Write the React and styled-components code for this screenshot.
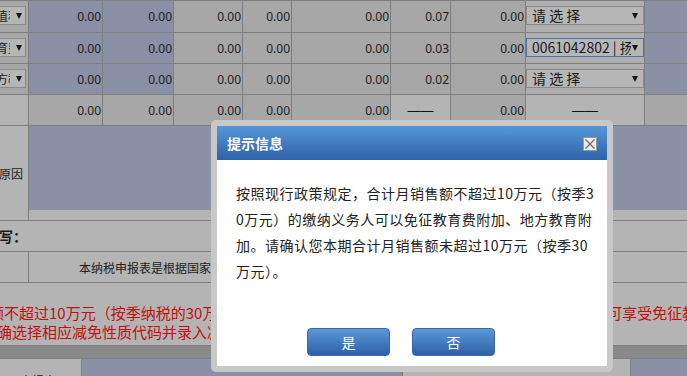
import React from "react";
import styled, { createGlobalStyle } from "styled-components";

const LINE = "#7e7e7e";
const BLUE = "#8a90a5";
const GRAY = "#a7a7a7";
const LIGHT = "#b4b4b4";

const GlobalStyle = createGlobalStyle`
  html, body {
    margin: 0;
    padding: 0;
  }
  body {
    width: 687px;
    height: 376px;
    overflow: hidden;
    background: ${LIGHT};
    color: #1d1d1d;
    font-family: "Noto Sans CJK SC", "Noto Sans", sans-serif;
  }
`;

const rows = [
  { tax: "值税", nums: ["0.00", "0.00", "0.00", "0.00", "0.00", "0.07", "0.00"], pick: "请 选 择" },
  { tax: "育费", nums: ["0.00", "0.00", "0.00", "0.00", "0.00", "0.03", "0.00"], pick: "0061042802 | 扬州", focus: true },
  { tax: "方教", nums: ["0.00", "0.00", "0.00", "0.00", "0.00", "0.02", "0.00"], pick: "请 选 择" },
];

const numTone = (i) => (i < 2 ? "blue" : "gray");

function App() {
  return (
    <Page>
      <GlobalStyle />
      <Sheet>
        {rows.map((row, r) => (
          <React.Fragment key={r}>
            <Cell $tone="gray" $align="left">
              <Select $w={32} $shift={-6} $pad={1}>
                <SelectLabel $size={12} $w={14}>{row.tax}</SelectLabel>
                <Caret $gap={6} />
              </Select>
            </Cell>
            {row.nums.map((n, i) => (
              <Cell key={i} $tone={numTone(i)}>
                <Num>{n}</Num>
              </Cell>
            ))}
            <Cell $tone="select" $align="left">
              <Select $w={118} $pad={5} $focus={row.focus}>
                <SelectLabel $size={14}>{row.pick}</SelectLabel>
                <Caret $gap={1} />
              </Select>
            </Cell>
            <Cell $tone="blue" />
          </React.Fragment>
        ))}

        <Cell $tone="light" />
        {["0.00", "0.00", "0.00", "0.00", "0.00"].map((n, i) => (
          <Cell key={i} $tone="gray">
            <Num>{n}</Num>
          </Cell>
        ))}
        <Cell $tone="light" $align="center">
          <Dash>——</Dash>
        </Cell>
        <Cell $tone="gray">
          <Num>0.00</Num>
        </Cell>
        <Cell $tone="light" $align="center">
          <Dash>——</Dash>
        </Cell>
        <Cell $tone="gray" />

        <Cell $tone="light">
          <Label>减免原因</Label>
        </Cell>
        <ReasonCell $span="2 / -1">
          <ReasonBox />
        </ReasonCell>

        <Cell $tone="light" $span="1 / -1" $align="left">
          <SectionTitle>填写：</SectionTitle>
        </Cell>

        <Cell $tone="light" />
        <Cell $tone="light" $span="2 / -1" $align="left">
          <Statement>本纳税申报表是根据国家税收法律法规及相关规定填报的，是真实的、可靠的、完整的。</Statement>
        </Cell>

        <NoteCell $span="1 / -1">
          <NoteLine $shift={-11}>
            额不超过10万元（按季纳税的30万元）的缴纳义务人，在申报教育费附加与地方教育附加时，可享受免征教育费附加、地方教育附加。
          </NoteLine>
          <NoteLine $shift={-3}>确选择相应减免性质代码并录入减免额。</NoteLine>
        </NoteCell>
      </Sheet>

      <Band />

      <FooterRow>
        <Cell $tone="light" $align="center">
          <Label>申报人</Label>
        </Cell>
        <Cell $tone="blue" />
        <Cell $tone="light" />
        <Cell $tone="blue" />
      </FooterRow>

      <Dialog>
        <DialogHeader>
          <DialogTitle>提示信息</DialogTitle>
          <CloseButton>
            <svg width="12" height="12" viewBox="0 0 12 12">
              <path d="M1.5 1.5 L10.5 10.5 M10.5 1.5 L1.5 10.5" stroke="#6a6a6a" strokeWidth="1.2" fill="none" />
            </svg>
          </CloseButton>
        </DialogHeader>
        <DialogBody>
          <Message>
            按照现行政策规定，合计月销售额不超过10万元（按季30万元）的缴纳义务人可以免征教育费附加、地方教育附加。请确认您本期合计月销售额未超过10万元（按季30万元）。
          </Message>
          <ButtonRow>
            <DialogButton>是</DialogButton>
            <DialogButton>否</DialogButton>
          </ButtonRow>
        </DialogBody>
      </Dialog>
    </Page>
  );
}

const toneColor = {
  blue: BLUE,
  gray: GRAY,
  light: LIGHT,
  select: "#afafaf",
};

const alignMap = {
  left: "flex-start",
  center: "center",
  right: "flex-end",
};

const Page = styled.div`
  position: relative;
  width: 687px;
  height: 376px;
  overflow: hidden;
`;

const Sheet = styled.div`
  display: grid;
  grid-template-columns: 28px 73px 70px 68px 48px 98px 59px 74px 118px 1fr;
  grid-template-rows: 31px 30px 30px 30px 94px 30px 30px 62px;
  gap: 1px;
  padding: 1px 0;
  background: ${LINE};
`;

const Cell = styled.div`
  display: flex;
  align-items: center;
  justify-content: ${(p) => alignMap[p.$align || "right"]};
  grid-column: ${(p) => p.$span || "auto"};
  min-width: 0;
  overflow: hidden;
  white-space: nowrap;
  background: ${(p) => toneColor[p.$tone] || LIGHT};
`;

const Num = styled.span`
  padding-right: 1px;
  font-family: "Noto Sans", "Liberation Sans", sans-serif;
  font-size: 12px;
  color: #202020;
`;

const Dash = styled.span`
  font-family: "Liberation Sans", sans-serif;
  font-size: 13px;
  color: #111;
`;

const Select = styled.div`
  box-sizing: border-box;
  display: flex;
  align-items: center;
  align-self: flex-start;
  flex-shrink: 0;
  width: ${(p) => p.$w}px;
  height: 19px;
  margin-top: 5px;
  margin-left: ${(p) => p.$shift || 0}px;
  padding: 0 5px 0 ${(p) => p.$pad}px;
  border: 1px solid ${(p) => (p.$focus ? "#4c72aa" : "#8a8a8a")};
  background: #b6b6b6;
`;

const SelectLabel = styled.span`
  flex: ${(p) => (p.$w ? "none" : "1")};
  width: ${(p) => (p.$w ? `${p.$w}px` : "auto")};
  overflow: hidden;
  font-size: ${(p) => p.$size}px;
  line-height: 17px;
  color: #1b1b1b;
`;

const Caret = styled.span`
  flex: none;
  width: 0;
  height: 0;
  margin-left: ${(p) => p.$gap}px;
  border-left: 3px solid transparent;
  border-right: 3px solid transparent;
  border-top: 6px solid #151515;
`;

const Label = styled.span`
  padding-right: 5px;
  font-size: 12px;
  color: #1b1b1b;
`;

const ReasonCell = styled(Cell)`
  align-items: stretch;
  padding-bottom: 10px;
  background: ${LIGHT};
`;

const ReasonBox = styled.div`
  flex: 1;
  background: ${BLUE};
`;

const SectionTitle = styled.span`
  margin-left: -15px;
  font-size: 14px;
  font-weight: 600;
  color: #1a1a1a;
`;

const Statement = styled.span`
  padding-left: 50px;
  font-size: 12px;
  color: #1d1d1d;
`;

const NoteCell = styled(Cell)`
  flex-direction: column;
  align-items: flex-start;
  justify-content: flex-start;
  padding-top: 20px;
  background: ${LIGHT};
`;

const NoteLine = styled.div`
  margin-left: ${(p) => p.$shift}px;
  font-size: 15px;
  line-height: 19px;
  color: #c20f0f;
  white-space: nowrap;
`;

const Band = styled.div`
  height: 12px;
  background: #8a8a8a;
`;

const FooterRow = styled.div`
  display: grid;
  grid-template-columns: 81px 320px 227px 1fr;
  grid-auto-rows: 42px;
  gap: 1px;
  padding-top: 1px;
  background: ${LINE};
`;

const Dialog = styled.div`
  position: absolute;
  left: 211px;
  top: 120px;
  width: 402px;
  height: 252px;
  box-sizing: border-box;
  display: flex;
  flex-direction: column;
  padding: 6px;
  border-radius: 5px;
  background: #c8c8c8;
`;

const DialogHeader = styled.div`
  display: flex;
  align-items: center;
  justify-content: space-between;
  height: 34px;
  padding: 0 10px;
  background: linear-gradient(#5596d6, #2f62a8);
`;

const DialogTitle = styled.span`
  font-size: 14px;
  font-weight: 700;
  color: #fff;
`;

const CloseButton = styled.span`
  box-sizing: border-box;
  display: flex;
  align-items: center;
  justify-content: center;
  width: 14px;
  height: 14px;
  margin-top: 2px;
  border: 1px solid #9a9a9a;
  background: #ececec;
`;

const DialogBody = styled.div`
  flex: 1;
  display: flex;
  flex-direction: column;
  padding: 20px 0 10px 19px;
  background: #fff;
`;

const Message = styled.p`
  width: 362px;
  margin: 0;
  font-size: 14px;
  line-height: 26px;
  letter-spacing: 0.5px;
  word-break: break-all;
  color: #222;
`;

const ButtonRow = styled.div`
  display: flex;
  justify-content: center;
  gap: 22px;
  margin-top: auto;
  padding-right: 41px;
`;

const DialogButton = styled.button`
  width: 83px;
  height: 28px;
  padding: 0;
  border: 1px solid #3a65a6;
  border-radius: 4px;
  background: linear-gradient(#5a98d8, #2e61a7);
  color: #fff;
  font-family: "Noto Sans CJK SC", sans-serif;
  font-size: 14px;
`;

export default App;
